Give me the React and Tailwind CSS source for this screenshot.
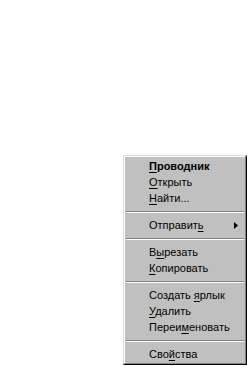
import React from 'react';

const items = [
  { pre: '', key: 'П', post: 'роводник', bold: true },
  { pre: '', key: 'О', post: 'ткрыть' },
  { pre: '', key: 'Н', post: 'айти...' },
  { sep: true },
  { pre: 'Отправит', key: 'ь', post: '', submenu: true },
  { sep: true },
  { pre: 'В', key: 'ы', post: 'резать' },
  { pre: '', key: 'К', post: 'опировать' },
  { sep: true },
  { pre: 'Создать ', key: 'я', post: 'рлык' },
  { pre: '', key: 'У', post: 'далить' },
  { pre: 'Переи', key: 'м', post: 'еновать' },
  { sep: true },
  { pre: 'Сво', key: 'й', post: 'ства' },
];

const MenuItem = ({ item }) => {
  if (item.sep) {
    return (
      <div className="h-[11px] pt-[5px]">
        <div className="h-px bg-[#808080]" />
        <div className="h-px bg-white" />
      </div>
    );
  }

  return (
    <div className="h-[16px] flex items-center justify-between pl-[23px] pr-[6px]">
      <span className={`leading-none ${item.bold ? 'font-bold' : ''}`}>
        {item.pre}
        <span className="underline underline-offset-[2px]">{item.key}</span>
        {item.post}
      </span>
      {item.submenu && (
        <svg width="4" height="7" viewBox="0 0 4 7">
          <path d="M0 0 L4 3.5 L0 7 Z" fill="#000" />
        </svg>
      )}
    </div>
  );
};

export default function App() {
  return (
    <div
      className="w-[247px] h-[366px] bg-white pt-[155px] pl-[123px] text-[11px] text-black"
      style={{ fontFamily: '"Liberation Sans", Arial, sans-serif' }}
    >
      <div className="w-[124px] border border-t-[#dfdfdf] border-l-[#dfdfdf] border-b-black border-r-black">
        <div className="border border-t-white border-l-white border-b-[#808080] border-r-[#808080] bg-[#c0c0c0] p-px">
          {items.map((item, i) => (
            <MenuItem key={i} item={item} />
          ))}
        </div>
      </div>
    </div>
  );
}
